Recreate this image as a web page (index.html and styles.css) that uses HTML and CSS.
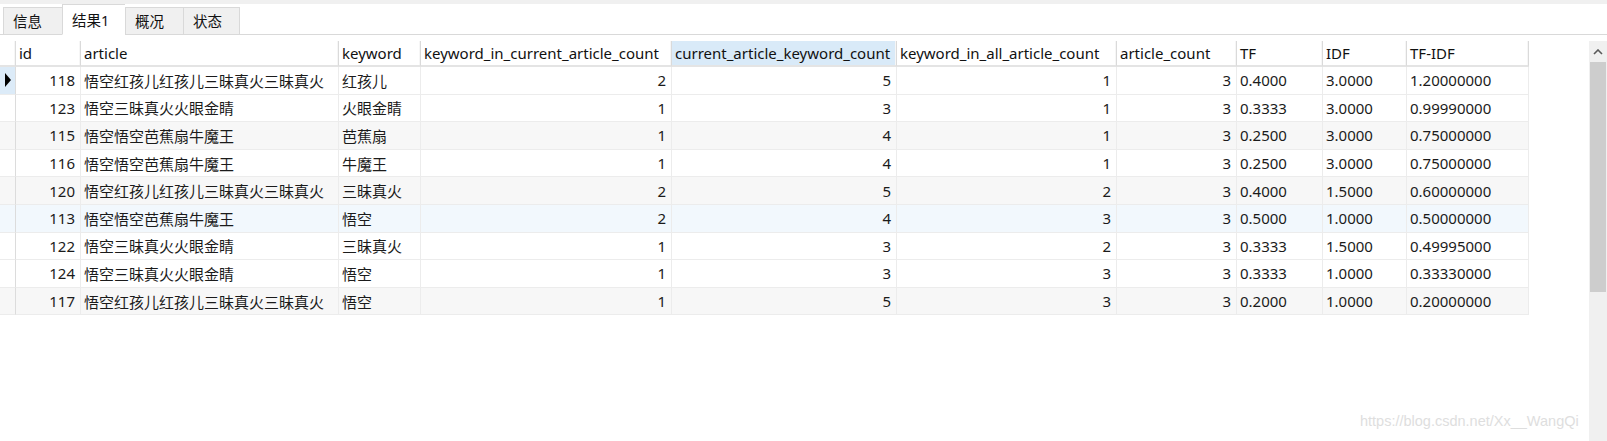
FILE: index.html
```html
<!DOCTYPE html>
<html lang="zh">
<head>
<meta charset="utf-8">
<title>结果1</title>
<link rel="stylesheet" href="styles.css">
</head>
<body>
<div class="app">
  <div class="topband"></div>
  <div class="tabbar">
    <div class="tab t1">信息</div>
    <div class="tab active t2">结果1</div>
    <div class="tab t3">概况</div>
    <div class="tab t4">状态</div>
  </div>
  <div class="content">
    <div class="grid">
      <div class="row head">
        <div class="c ind"></div>
        <div class="c">id</div>
        <div class="c">article</div>
        <div class="c">keyword</div>
        <div class="c">keyword_in_current_article_count</div>
        <div class="c sel">current_article_keyword_count</div>
        <div class="c">keyword_in_all_article_count</div>
        <div class="c">article_count</div>
        <div class="c">TF</div>
        <div class="c">IDF</div>
        <div class="c">TF-IDF</div>
      </div>
      <div class="row">
        <div class="c ind cur"><span class="tri"></span></div>
        <div class="c n">118</div><div class="c">悟空红孩儿红孩儿三昧真火三昧真火</div><div class="c">红孩儿</div>
        <div class="c n">2</div><div class="c n">5</div><div class="c n">1</div><div class="c n">3</div>
        <div class="c">0.4000</div><div class="c">3.0000</div><div class="c">1.20000000</div>
      </div>
      <div class="row">
        <div class="c ind"></div>
        <div class="c n">123</div><div class="c">悟空三昧真火火眼金睛</div><div class="c">火眼金睛</div>
        <div class="c n">1</div><div class="c n">3</div><div class="c n">1</div><div class="c n">3</div>
        <div class="c">0.3333</div><div class="c">3.0000</div><div class="c">0.99990000</div>
      </div>
      <div class="row alt">
        <div class="c ind"></div>
        <div class="c n">115</div><div class="c">悟空悟空芭蕉扇牛魔王</div><div class="c">芭蕉扇</div>
        <div class="c n">1</div><div class="c n">4</div><div class="c n">1</div><div class="c n">3</div>
        <div class="c">0.2500</div><div class="c">3.0000</div><div class="c">0.75000000</div>
      </div>
      <div class="row">
        <div class="c ind"></div>
        <div class="c n">116</div><div class="c">悟空悟空芭蕉扇牛魔王</div><div class="c">牛魔王</div>
        <div class="c n">1</div><div class="c n">4</div><div class="c n">1</div><div class="c n">3</div>
        <div class="c">0.2500</div><div class="c">3.0000</div><div class="c">0.75000000</div>
      </div>
      <div class="row alt">
        <div class="c ind"></div>
        <div class="c n">120</div><div class="c">悟空红孩儿红孩儿三昧真火三昧真火</div><div class="c">三昧真火</div>
        <div class="c n">2</div><div class="c n">5</div><div class="c n">2</div><div class="c n">3</div>
        <div class="c">0.4000</div><div class="c">1.5000</div><div class="c">0.60000000</div>
      </div>
      <div class="row hover">
        <div class="c ind"></div>
        <div class="c n">113</div><div class="c">悟空悟空芭蕉扇牛魔王</div><div class="c">悟空</div>
        <div class="c n">2</div><div class="c n">4</div><div class="c n">3</div><div class="c n">3</div>
        <div class="c">0.5000</div><div class="c">1.0000</div><div class="c">0.50000000</div>
      </div>
      <div class="row">
        <div class="c ind"></div>
        <div class="c n">122</div><div class="c">悟空三昧真火火眼金睛</div><div class="c">三昧真火</div>
        <div class="c n">1</div><div class="c n">3</div><div class="c n">2</div><div class="c n">3</div>
        <div class="c">0.3333</div><div class="c">1.5000</div><div class="c">0.49995000</div>
      </div>
      <div class="row">
        <div class="c ind"></div>
        <div class="c n">124</div><div class="c">悟空三昧真火火眼金睛</div><div class="c">悟空</div>
        <div class="c n">1</div><div class="c n">3</div><div class="c n">3</div><div class="c n">3</div>
        <div class="c">0.3333</div><div class="c">1.0000</div><div class="c">0.33330000</div>
      </div>
      <div class="row alt">
        <div class="c ind"></div>
        <div class="c n">117</div><div class="c">悟空红孩儿红孩儿三昧真火三昧真火</div><div class="c">悟空</div>
        <div class="c n">1</div><div class="c n">5</div><div class="c n">3</div><div class="c n">3</div>
        <div class="c">0.2000</div><div class="c">1.0000</div><div class="c">0.20000000</div>
      </div>
    </div>
    <div class="vscroll">
      <div class="up">
        <svg width="10" height="6" viewBox="0 0 10 6"><polyline points="1,5 5,1 9,5" fill="none" stroke="#5a5a5a" stroke-width="1.6"/></svg>
      </div>
      <div class="thumb"></div>
    </div>
  </div>
  <div class="watermark">https://blog.csdn.net/Xx__WangQi</div>
</div>
</body>
</html>
```

FILE: styles.css
```css
html, body {
  margin: 0;
  padding: 0;
  background: #ffffff;
}
.app {
  position: relative;
  width: 1607px;
  height: 441px;
  overflow: hidden;
  font-family: "Noto Sans", "Noto Sans CJK SC", sans-serif;
  font-size: 15px;
  color: #1b1b1b;
}
.topband {
  height: 4px;
  background: #f0f0f0;
}
.tabbar {
  display: flex;
  align-items: flex-end;
  height: 30px;
  padding-left: 3px;
  border-bottom: 1px solid #d9d9d9;
  background: #ffffff;
}
.tab {
  box-sizing: border-box;
  height: 28px;
  margin-bottom: -1px;
  padding-left: 9px;
  line-height: 26px;
  background: #f0f0f0;
  border: 1px solid #d9d9d9;
  border-right: none;
  font-size: 14.5px;
  color: #111;
}
.tab.t4 { border-right: 1px solid #d9d9d9; }
.t1 { width: 59px; }
.t2 { width: 63px; }
.t3 { width: 58px; }
.t4 { width: 57px; }
.tab.active {
  height: 31px;
  background: #ffffff;
  border-bottom-color: #ffffff;
  line-height: 30px;
}
.content {
  display: flex;
  justify-content: space-between;
  padding-top: 6px;
  height: 400px;
}
.grid {
  width: 1529px;
  align-self: flex-start;
}
.row {
  display: grid;
  grid-template-columns: 16px 65px 258px 82px 251px 225px 220px 120px 86px 84px 122px;
  height: 27.6px;
  background: #ffffff;
}
.row.alt { background: #f7f7f7; }
.row.hover { background: #f2f8fd; }
.row.head {
  height: 26px;
  background: #ffffff;
}
.c {
  box-sizing: border-box;
  display: flex;
  align-items: center;
  padding: 0 5px 0 3px;
  border-right: 1px solid #ececec;
  border-bottom: 1px solid #ececec;
  white-space: nowrap;
  overflow: hidden;
}
.c.n { justify-content: flex-end; }
.head .c {
  color: #111;
  border-right: 1px solid #dadada;
  border-bottom: 2px solid #e4e4e4;
  box-shadow: inset -1px 0 0 #f6f6f6;
}
.head .c.sel { background: #d9eaf8; }
.ind { padding: 0; }
.row .c.ind { border-right: 1px solid #dcdcdc; }
.ind.cur { background: #dcebf8; }
.tri {
  width: 0;
  height: 0;
  margin-left: 5px;
  border-top: 7px solid transparent;
  border-bottom: 7px solid transparent;
  border-left: 6px solid #000;
}
.vscroll {
  width: 18px;
  background: #f0f0f0;
  display: flex;
  flex-direction: column;
}
.up {
  height: 21px;
  display: flex;
  align-items: center;
  justify-content: center;
}
.thumb {
  height: 230px;
  background: #cdcdcd;
  margin: 0 1px;
}
.watermark {
  position: absolute;
  left: 1360px;
  top: 413px;
  font-family: "Liberation Sans", Arial, sans-serif;
  font-size: 14.5px;
  color: #dedede;
  white-space: nowrap;
}
```
